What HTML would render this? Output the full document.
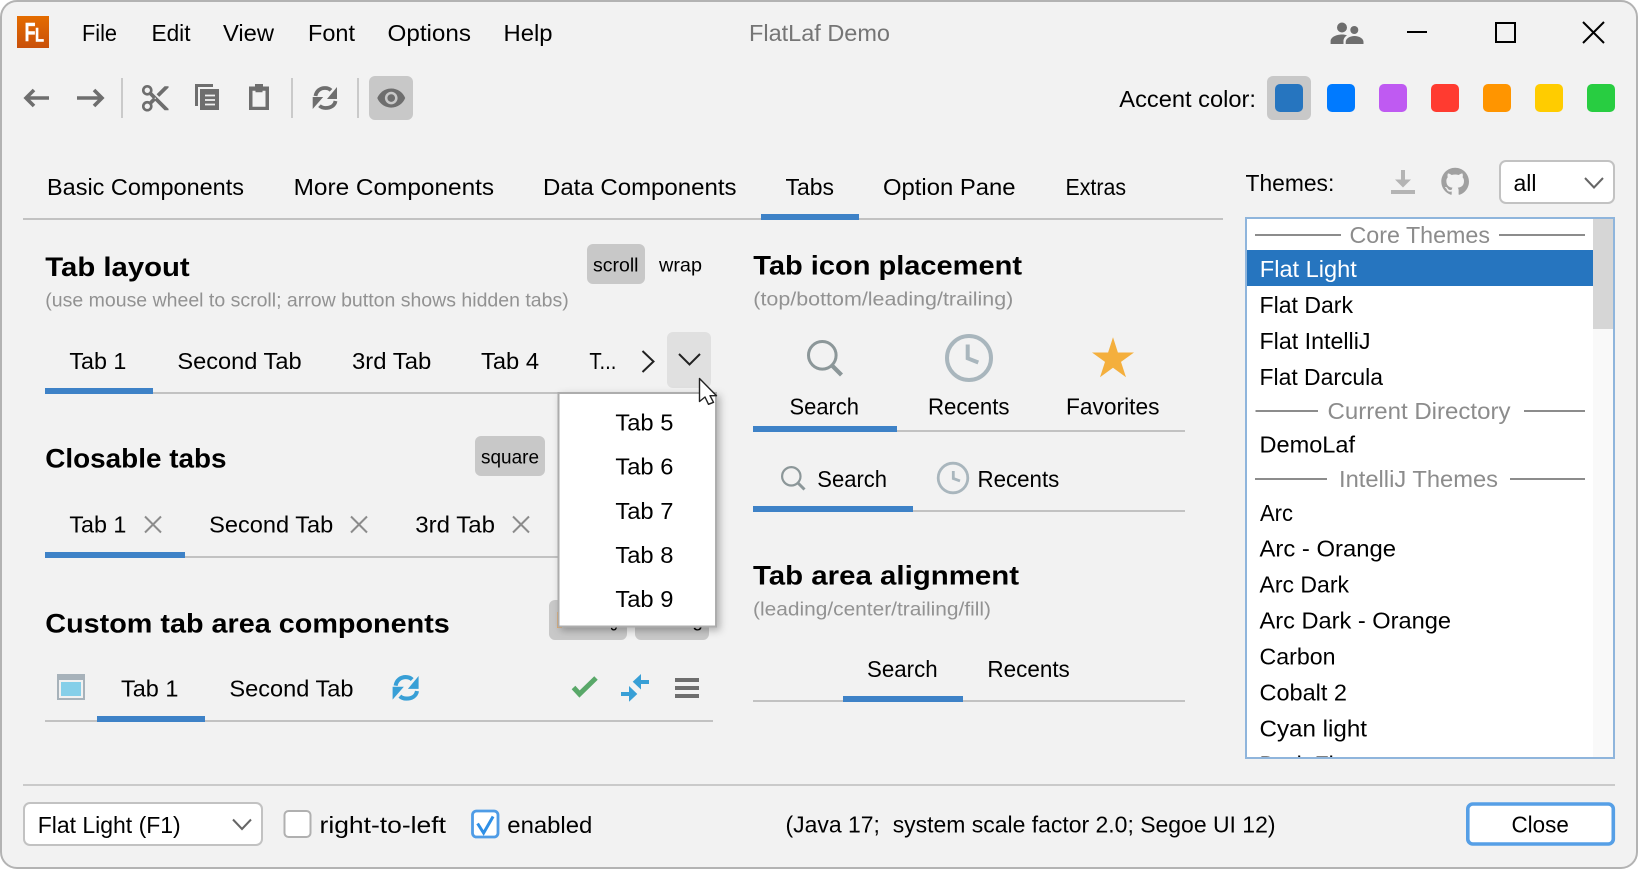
<!DOCTYPE html>
<html><head><meta charset="utf-8"><title>FlatLaf Demo</title>
<style>
html,body{margin:0;padding:0;background:#fff;width:1638px;height:869px;overflow:hidden}
svg{display:block}
text{font-family:"Liberation Sans",sans-serif;fill:#000;white-space:pre}
.t{font-size:23px}
.h{font-size:27px;font-weight:bold}
.s{font-size:19.5px;fill:#929292}
.b{font-size:19.5px}
.g{font-size:23px;fill:#8c8c8c}
</style></head><body>
<svg xmlns="http://www.w3.org/2000/svg" width="1638" height="869" viewBox="0 0 1638 869">
<defs>
<linearGradient id="lg" x1="0" y1="0" x2="0" y2="1"><stop offset="0" stop-color="#e46c00"/><stop offset="1" stop-color="#c9500a"/></linearGradient>
<filter id="sh" x="-10%" y="-10%" width="125%" height="125%"><feDropShadow dx="3" dy="3" stdDeviation="4" flood-color="#000" flood-opacity=".28"/></filter>
<clipPath id="lc"><rect x="1247" y="219" width="346" height="538"/></clipPath>
</defs>

<rect x="1" y="1" width="1636" height="867" rx="16" fill="#f2f2f2" stroke="#b3b3b3" stroke-width="2"/>

<!-- logo -->
<rect x="17" y="16" width="32" height="32" fill="url(#lg)"/>
<text x="24.5" y="41" textLength="11" lengthAdjust="spacingAndGlyphs" style="font-size:26px;font-weight:bold;fill:#fff;stroke:#fff;stroke-width:.5">F</text>
<text x="35" y="41.5" textLength="9" lengthAdjust="spacingAndGlyphs" style="font-size:19px;font-weight:bold;fill:#fff;stroke:#fff;stroke-width:.5">L</text>

<!-- menu -->
<text class="t" x="82" y="41" textLength="35" lengthAdjust="spacingAndGlyphs">File</text>
<text class="t" x="151.500" y="41" textLength="39" lengthAdjust="spacingAndGlyphs">Edit</text>
<text class="t" x="223" y="41" textLength="51" lengthAdjust="spacingAndGlyphs">View</text>
<text class="t" x="308" y="41" textLength="47" lengthAdjust="spacingAndGlyphs">Font</text>
<text class="t" x="387.500" y="41" textLength="83.500" lengthAdjust="spacingAndGlyphs">Options</text>
<text class="t" x="503.500" y="41" textLength="49" lengthAdjust="spacingAndGlyphs">Help</text>
<text class="t" x="749" y="41" textLength="141" lengthAdjust="spacingAndGlyphs" style="fill:#757575">FlatLaf Demo</text>

<!-- title bar buttons -->
<g fill="#6e6e6e">
<circle cx="1342" cy="27.500" r="5"/><circle cx="1354.300" cy="30" r="4"/>
<path d="M1330.600 44v-3c.4-4.500 6.400-6.500 11.400-6.500 2 0 3.500.3 5 .8-2.200 1.500-3.500 3.500-3.500 5.700V44z"/>
<path d="M1345.700 44v-2c0-3.500 4-6 8.800-6s9 2.500 9 6v2z"/>
</g>
<path d="M1407 32h20" stroke="#000" stroke-width="2"/>
<rect x="1496" y="23" width="19" height="19" fill="none" stroke="#000" stroke-width="2"/>
<path d="M1583 22l21 21M1604 22l-21 21" stroke="#000" stroke-width="2" fill="none"/>

<!-- toolbar -->
<path d="M49 98H27M34 90l-8 8 8 8" fill="none" stroke="#6e6e6e" stroke-width="3.600"/>
<path d="M77 98h23M94 90l8 8-8 8" fill="none" stroke="#6e6e6e" stroke-width="3.600"/>
<rect x="121" y="78" width="2" height="40" fill="#cacaca"/>
<g transform="translate(139.300 82.300) scale(1.330)" fill="#6e6e6e"><path d="M9.640 7.640c.23-.5.36-1.050.36-1.640 0-2.210-1.790-4-4-4S2 3.790 2 6s1.790 4 4 4c.59 0 1.140-.13 1.640-.36L10 12l-2.360 2.360C7.140 14.130 6.590 14 6 14c-2.210 0-4 1.790-4 4s1.790 4 4 4 4-1.790 4-4c0-.59-.13-1.140-.36-1.640L12 14l7 7h3v-1L9.640 7.640zM6 8c-1.100 0-2-.89-2-2s.9-2 2-2 2 .89 2 2-.9 2-2 2zm0 12c-1.100 0-2-.89-2-2s.9-2 2-2 2 .89 2 2-.9 2-2 2zm6-7.500c-.28 0-.5-.22-.5-.5s.22-.5.5-.5.5.22.5.5-.22.5-.5.5zM19 3l-6 6 2 2 7-7V3z"/></g>
<path d="M195 84h18v3h-15v19h-3z" fill="#6e6e6e"/>
<path d="M200 89h19v21h-19z" fill="#6e6e6e"/>
<path d="M205 95.500h10M205 100h10M205 104.500h10" stroke="#f2f2f2" stroke-width="1.800"/>
<path d="M249 86.500h6V84h8v2.500h6V110h-20zM252.500 90.700v16h13v-16h-3v1.500h-7v-1.500z" fill="#6e6e6e" fill-rule="evenodd"/>
<rect x="291" y="78" width="2" height="40" fill="#cacaca"/>
<path d="M315.500 96c.8-5 4.700-8 9.500-8 2.500 0 4.500.8 6 2.300M335.500 101c-.8 4.500-4.700 7-10 7-2.500 0-4.500-.8-6-2.300" fill="none" stroke="#6e6e6e" stroke-width="3.800"/><path d="M337 87v12h-10zM312.700 97h10.500l-10.500 12z" fill="#6e6e6e"/>
<rect x="357" y="78" width="2" height="40" fill="#cacaca"/>
<rect x="369" y="76" width="44" height="44" rx="6" fill="#c8c8c8"/>
<g transform="translate(376 82.800) scale(1.270)" fill="#6e6e6e"><path d="M12 4.500C7 4.500 2.730 7.610 1 12c1.730 4.390 6 7.500 11 7.500s9.270-3.110 11-7.500c-1.730-4.390-6-7.500-11-7.500zM12 17c-2.760 0-5-2.240-5-5s2.240-5 5-5 5 2.240 5 5-2.240 5-5 5zm0-8c-1.660 0-3 1.340-3 3s1.340 3 3 3 3-1.340 3-3-1.340-3-3-3z"/></g>

<!-- accent -->
<text class="t" x="1119.300" y="107" textLength="136.700" lengthAdjust="spacingAndGlyphs">Accent color:</text>
<rect x="1267" y="76" width="44" height="44" rx="6" fill="#c8c8c8"/>
<rect x="1275" y="84" width="28" height="28" rx="5" fill="#2675bf"/>
<rect x="1327" y="84" width="28" height="28" rx="5" fill="#007aff"/>
<rect x="1379" y="84" width="28" height="28" rx="5" fill="#bf5af2"/>
<rect x="1431" y="84" width="28" height="28" rx="5" fill="#ff3b30"/>
<rect x="1483" y="84" width="28" height="28" rx="5" fill="#ff9500"/>
<rect x="1535" y="84" width="28" height="28" rx="5" fill="#ffcc00"/>
<rect x="1587" y="84" width="28" height="28" rx="5" fill="#28cd41"/>

<!-- main tabs -->
<text class="t" x="47" y="195" textLength="197" lengthAdjust="spacingAndGlyphs">Basic Components</text>
<text class="t" x="293.600" y="195" textLength="200.500" lengthAdjust="spacingAndGlyphs">More Components</text>
<text class="t" x="543" y="195" textLength="193.500" lengthAdjust="spacingAndGlyphs">Data Components</text>
<text class="t" x="785.500" y="195" textLength="48.500" lengthAdjust="spacingAndGlyphs">Tabs</text>
<text class="t" x="883" y="195" textLength="132.500" lengthAdjust="spacingAndGlyphs">Option Pane</text>
<text class="t" x="1065.500" y="195" textLength="60.500" lengthAdjust="spacingAndGlyphs">Extras</text>
<rect x="23" y="218" width="1200" height="2" fill="#c2c2c2"/>
<rect x="761" y="214" width="98" height="6" fill="#3e82c7"/>

<!-- Tab layout -->
<text class="h" x="45.300" y="276" textLength="144.400" lengthAdjust="spacingAndGlyphs">Tab layout</text>
<text class="s" x="45.300" y="306.500" textLength="523.400" lengthAdjust="spacingAndGlyphs">(use mouse wheel to scroll; arrow button shows hidden tabs)</text>
<rect x="587" y="244" width="58" height="40" rx="6" fill="#c8c8c8"/>
<text class="b" x="593" y="271.500" textLength="45.500" lengthAdjust="spacingAndGlyphs">scroll</text>
<text class="b" x="659" y="271.500" textLength="43" lengthAdjust="spacingAndGlyphs">wrap</text>
<text class="t" x="69.400" y="369" textLength="57" lengthAdjust="spacingAndGlyphs">Tab 1</text>
<text class="t" x="177.400" y="369" textLength="124.200" lengthAdjust="spacingAndGlyphs">Second Tab</text>
<text class="t" x="352" y="369" textLength="79.300" lengthAdjust="spacingAndGlyphs">3rd Tab</text>
<text class="t" x="481" y="369" textLength="58" lengthAdjust="spacingAndGlyphs">Tab 4</text>
<text class="t" x="589.400" y="369" textLength="27" lengthAdjust="spacingAndGlyphs">T...</text>
<path d="M642.500 351l11 10.500-11 10.500" fill="none" stroke="#222" stroke-width="2"/>
<rect x="667" y="332" width="44" height="56" rx="6" fill="#e0e0e0"/>
<path d="M679 354l10.500 10.500L700 354" fill="none" stroke="#222" stroke-width="2"/>
<rect x="45" y="392" width="668" height="2" fill="#c2c2c2"/>
<rect x="45" y="388" width="108" height="6" fill="#3e82c7"/>

<!-- Closable tabs -->
<text class="h" x="45.300" y="467.500" textLength="181.200" lengthAdjust="spacingAndGlyphs">Closable tabs</text>
<rect x="475" y="436" width="70" height="40" rx="6" fill="#c8c8c8"/>
<text class="b" x="481" y="463.500" textLength="58" lengthAdjust="spacingAndGlyphs">square</text>
<text class="t" x="69.400" y="532.700" textLength="57" lengthAdjust="spacingAndGlyphs">Tab 1</text>
<path d="M145 516.500l16 16M161 516.500l-16 16" stroke="#8c8c8c" stroke-width="2" fill="none"/>
<text class="t" x="209.200" y="532.700" textLength="124.100" lengthAdjust="spacingAndGlyphs">Second Tab</text>
<path d="M351 516.500l16 16M367 516.500l-16 16" stroke="#8c8c8c" stroke-width="2" fill="none"/>
<text class="t" x="415.300" y="532.700" textLength="79.700" lengthAdjust="spacingAndGlyphs">3rd Tab</text>
<path d="M513 516.500l16 16M529 516.500l-16 16" stroke="#8c8c8c" stroke-width="2" fill="none"/>
<rect x="45" y="556" width="520" height="2" fill="#c2c2c2"/>
<rect x="45" y="552" width="140" height="6" fill="#3e82c7"/>

<!-- Custom tab area -->
<text class="h" x="45.300" y="632.300" textLength="404.500" lengthAdjust="spacingAndGlyphs">Custom tab area components</text>
<rect x="549" y="600" width="78" height="40" rx="6" fill="#c8c8c8"/>
<rect x="635" y="600" width="74" height="40" rx="6" fill="#c8c8c8"/>
<rect x="557" y="612" width="5" height="16" fill="#f0a858"/>
<text class="b" x="566" y="626.500" textLength="52" lengthAdjust="spacingAndGlyphs">Leading</text>
<text class="b" x="641" y="626.500" textLength="62" lengthAdjust="spacingAndGlyphs">Trailing</text>
<rect x="57" y="674" width="28" height="26" fill="#a7b2ba"/>
<rect x="59" y="680" width="24" height="18" fill="#f1f1f1"/>
<rect x="61" y="682" width="20" height="14" fill="#85cfe9"/>
<text class="t" x="121" y="696.700" textLength="57.400" lengthAdjust="spacingAndGlyphs">Tab 1</text>
<text class="t" x="229.400" y="696.700" textLength="124.100" lengthAdjust="spacingAndGlyphs">Second Tab</text>
<g transform="translate(392.600 676) scale(1.070 1.076) translate(-312.700 -87)"><path d="M315.500 96c.8-5 4.700-8 9.500-8 2.500 0 4.500.8 6 2.300M335.500 101c-.8 4.500-4.700 7-10 7-2.500 0-4.500-.8-6-2.300" fill="none" stroke="#389fd6" stroke-width="3.800"/><path d="M337 87v12h-10zM312.700 97h10.500l-10.500 12z" fill="#389fd6"/></g>
<path d="M573.500 687.500l6 6.500 16.500-16" fill="none" stroke="#59a869" stroke-width="5"/>
<path d="M632.700 681.700l8.300-7.700V680h8v4h-8v5.500zM637.300 694l-8.300-8v6h-8v4h8v5.700z" fill="#389fd6"/>
<path d="M675 678h24v4h-24zM675 686h24v4h-24zM675 694h24v4h-24z" fill="#6e6e6e"/>
<rect x="45" y="720" width="668" height="2" fill="#c2c2c2"/>
<rect x="97" y="716" width="108" height="6" fill="#3e82c7"/>

<!-- popup -->
<rect x="558.500" y="393" width="157.500" height="233.500" fill="#fff" stroke="#adadad" stroke-width="2" filter="url(#sh)"/>
<text class="t" x="615.400" y="430.700" textLength="58" lengthAdjust="spacingAndGlyphs">Tab 5</text>
<text class="t" x="615.400" y="474.700" textLength="58" lengthAdjust="spacingAndGlyphs">Tab 6</text>
<text class="t" x="615.400" y="518.800" textLength="58" lengthAdjust="spacingAndGlyphs">Tab 7</text>
<text class="t" x="615.400" y="562.800" textLength="58" lengthAdjust="spacingAndGlyphs">Tab 8</text>
<text class="t" x="615.400" y="606.800" textLength="58" lengthAdjust="spacingAndGlyphs">Tab 9</text>
<path d="M699.500 378.500v23l5.500-4.500 3.500 7.300 5-2-3.500-6.600h6.500z" fill="#fff" stroke="#222" stroke-width="1.400" stroke-linejoin="round"/>

<!-- Tab icon placement -->
<text class="h" x="753.300" y="274.300" textLength="268.700" lengthAdjust="spacingAndGlyphs">Tab icon placement</text>
<text class="s" x="753.300" y="305.500" textLength="260" lengthAdjust="spacingAndGlyphs">(top/bottom/leading/trailing)</text>
<circle cx="822.300" cy="355.300" r="13.800" fill="none" stroke="#8c9799" stroke-width="3"/>
<path d="M832 365.500l9.500 9.500" stroke="#8c9799" stroke-width="4.200"/>
<circle cx="969" cy="358" r="22" fill="none" stroke="#a9b6bd" stroke-width="4"/>
<path d="M967.700 344.500v13.800l10.600 4.200" fill="none" stroke="#a9b6bd" stroke-width="4"/>
<polygon points="1113,337.300 1117.900,352.500 1134,352.500 1121,361.900 1126,377.300 1113,367.700 1100,377.300 1105,361.900 1092,352.500 1108.100,352.500" fill="#f4af3d"/>
<text class="t" x="789.500" y="414.700" textLength="69.500" lengthAdjust="spacingAndGlyphs">Search</text>
<text class="t" x="928" y="414.700" textLength="81.500" lengthAdjust="spacingAndGlyphs">Recents</text>
<text class="t" x="1066" y="414.700" textLength="93.500" lengthAdjust="spacingAndGlyphs">Favorites</text>
<rect x="753" y="430" width="432" height="2" fill="#c2c2c2"/>
<rect x="753" y="426" width="144" height="6" fill="#3e82c7"/>
<circle cx="791.300" cy="476.300" r="9.200" fill="none" stroke="#8c9799" stroke-width="2.200"/>
<path d="M798 483l6.500 6.500" stroke="#8c9799" stroke-width="3"/>
<circle cx="953" cy="478" r="14.800" fill="none" stroke="#a9b6bd" stroke-width="2.800"/>
<path d="M953.300 471v7.500l6.700 2.400" fill="none" stroke="#a9b6bd" stroke-width="2.800"/>
<text class="t" x="817.300" y="487" textLength="69.700" lengthAdjust="spacingAndGlyphs">Search</text>
<text class="t" x="977.500" y="487" textLength="81.800" lengthAdjust="spacingAndGlyphs">Recents</text>
<rect x="753" y="510" width="432" height="2" fill="#c2c2c2"/>
<rect x="753" y="506" width="160" height="6" fill="#3e82c7"/>

<!-- Tab area alignment -->
<text class="h" x="753" y="584.300" textLength="266" lengthAdjust="spacingAndGlyphs">Tab area alignment</text>
<text class="s" x="753" y="615.500" textLength="238" lengthAdjust="spacingAndGlyphs">(leading/center/trailing/fill)</text>
<text class="t" x="867" y="677" textLength="70.600" lengthAdjust="spacingAndGlyphs">Search</text>
<text class="t" x="987.400" y="677" textLength="82.400" lengthAdjust="spacingAndGlyphs">Recents</text>
<rect x="753" y="700" width="432" height="2" fill="#c2c2c2"/>
<rect x="843" y="696" width="120" height="6" fill="#3e82c7"/>

<!-- Themes -->
<text class="t" x="1245.500" y="191" textLength="88.800" lengthAdjust="spacingAndGlyphs">Themes:</text>
<path d="M1401 170h4v9.500h6l-8 8-8-8h6zM1391 190h24v4h-24z" fill="#b4b4b4"/>
<g transform="translate(1441.300 167.800) scale(1.730)" fill="#a0a0a0"><path d="M8 0C3.580 0 0 3.580 0 8c0 3.540 2.290 6.530 5.470 7.590.4.070.55-.17.55-.38 0-.19-.01-.82-.01-1.490-2.010.37-2.530-.49-2.690-.94-.09-.23-.48-.94-.82-1.130-.28-.15-.68-.52-.01-.53.63-.01 1.080.58 1.230.82.72 1.210 1.870.87 2.330.66.07-.52.28-.87.51-1.070-1.780-.2-3.640-.89-3.640-3.950 0-.87.31-1.590.82-2.150-.08-.2-.36-1.020.08-2.120 0 0 .67-.21 2.200.82.64-.18 1.320-.27 2-.27.68 0 1.360.09 2 .27 1.530-1.040 2.200-.82 2.200-.82.44 1.100.16 1.920.08 2.120.51.56.82 1.270.82 2.150 0 3.070-1.870 3.750-3.650 3.950.29.25.54.73.54 1.480 0 1.070-.01 1.930-.01 2.200 0 .21.15.46.55.38A8.013 8.013 0 0 0 16 8c0-4.420-3.580-8-8-8z"/></g>
<rect x="1500" y="161" width="114" height="42" rx="6" fill="#fff" stroke="#c2c2c2" stroke-width="2"/>
<text class="t" x="1513.500" y="191" textLength="23" lengthAdjust="spacingAndGlyphs">all</text>
<path d="M1585 178l9 9.500 9-9.500" fill="none" stroke="#666" stroke-width="2"/>

<!-- list -->
<rect x="1246" y="218" width="368" height="540" fill="#fff"/>
<rect x="1593" y="219" width="20" height="538" fill="#f9f9f9"/>
<rect x="1593" y="219" width="20" height="110" fill="#d6d6d6"/>
<g clip-path="url(#lc)">
<rect x="1255" y="234" width="86" height="2" fill="#8c8c8c"/><rect x="1499" y="234" width="86" height="2" fill="#8c8c8c"/>
<text class="g" x="1349.500" y="243" textLength="140.500" lengthAdjust="spacingAndGlyphs">Core Themes</text>
<rect x="1247" y="250" width="346" height="36" fill="#2675bf"/>
<text class="t" x="1259.800" y="277" textLength="97" lengthAdjust="spacingAndGlyphs" style="fill:#fff">Flat Light</text>
<text class="t" x="1259.500" y="313" textLength="93.500" lengthAdjust="spacingAndGlyphs">Flat Dark</text>
<text class="t" x="1259.500" y="349" textLength="111" lengthAdjust="spacingAndGlyphs">Flat IntelliJ</text>
<text class="t" x="1259.500" y="385" textLength="123.500" lengthAdjust="spacingAndGlyphs">Flat Darcula</text>
<rect x="1255.500" y="410" width="62.500" height="2" fill="#8c8c8c"/><rect x="1524" y="410" width="61" height="2" fill="#8c8c8c"/>
<text class="g" x="1327.500" y="419" textLength="183" lengthAdjust="spacingAndGlyphs">Current Directory</text>
<text class="t" x="1259.500" y="452.500" textLength="95.500" lengthAdjust="spacingAndGlyphs">DemoLaf</text>
<rect x="1255" y="478" width="72" height="2" fill="#8c8c8c"/><rect x="1510" y="478" width="75" height="2" fill="#8c8c8c"/>
<text class="g" x="1339" y="487" textLength="159" lengthAdjust="spacingAndGlyphs">IntelliJ Themes</text>
<text class="t" x="1260" y="521" textLength="33" lengthAdjust="spacingAndGlyphs">Arc</text>
<text class="t" x="1259.500" y="556.700" textLength="136.500" lengthAdjust="spacingAndGlyphs">Arc - Orange</text>
<text class="t" x="1259.500" y="592.700" textLength="89.500" lengthAdjust="spacingAndGlyphs">Arc Dark</text>
<text class="t" x="1259.500" y="628.700" textLength="191.500" lengthAdjust="spacingAndGlyphs">Arc Dark - Orange</text>
<text class="t" x="1259.500" y="664.500" textLength="76" lengthAdjust="spacingAndGlyphs">Carbon</text>
<text class="t" x="1259.500" y="700.500" textLength="87.500" lengthAdjust="spacingAndGlyphs">Cobalt 2</text>
<text class="t" x="1259.500" y="736.700" textLength="107.500" lengthAdjust="spacingAndGlyphs">Cyan light</text>
<text class="t" x="1259.500" y="772.500" textLength="93.500" lengthAdjust="spacingAndGlyphs">Dark Flat</text>
</g>
<rect x="1246" y="218" width="368" height="540" fill="none" stroke="#8fb5dc" stroke-width="2"/>

<!-- footer -->
<rect x="23" y="784" width="1592" height="2" fill="#cacaca"/>
<rect x="24" y="803" width="238" height="42" rx="6" fill="#fff" stroke="#c2c2c2" stroke-width="2"/>
<text class="t" x="37.700" y="833" textLength="143" lengthAdjust="spacingAndGlyphs">Flat Light (F1)</text>
<path d="M233 819.500l9 9.500 9-9.500" fill="none" stroke="#666" stroke-width="2"/>
<rect x="284.500" y="811" width="26" height="26" rx="4" fill="#fff" stroke="#b0b0b0" stroke-width="2"/>
<text class="t" x="319.500" y="833" textLength="126.500" lengthAdjust="spacingAndGlyphs">right-to-left</text>
<rect x="472.500" y="811" width="25.500" height="26" rx="4" fill="#fff" stroke="#4f9ce6" stroke-width="2.800"/>
<path d="M477.600 823.500l6 9.500 9.500-16.500" fill="none" stroke="#2e8fe6" stroke-width="3"/>
<text class="t" x="507.300" y="833" textLength="85" lengthAdjust="spacingAndGlyphs">enabled</text>
<text class="t" x="785.500" y="832.500" textLength="490" lengthAdjust="spacingAndGlyphs">(Java 17;  system scale factor 2.0; Segoe UI 12)</text>
<rect x="1467.800" y="804" width="145.500" height="40" rx="5" fill="#fff" stroke="#569fe6" stroke-width="3.600"/>
<text class="t" x="1511.500" y="832.500" textLength="57.300" lengthAdjust="spacingAndGlyphs">Close</text>
</svg>
</body></html>
